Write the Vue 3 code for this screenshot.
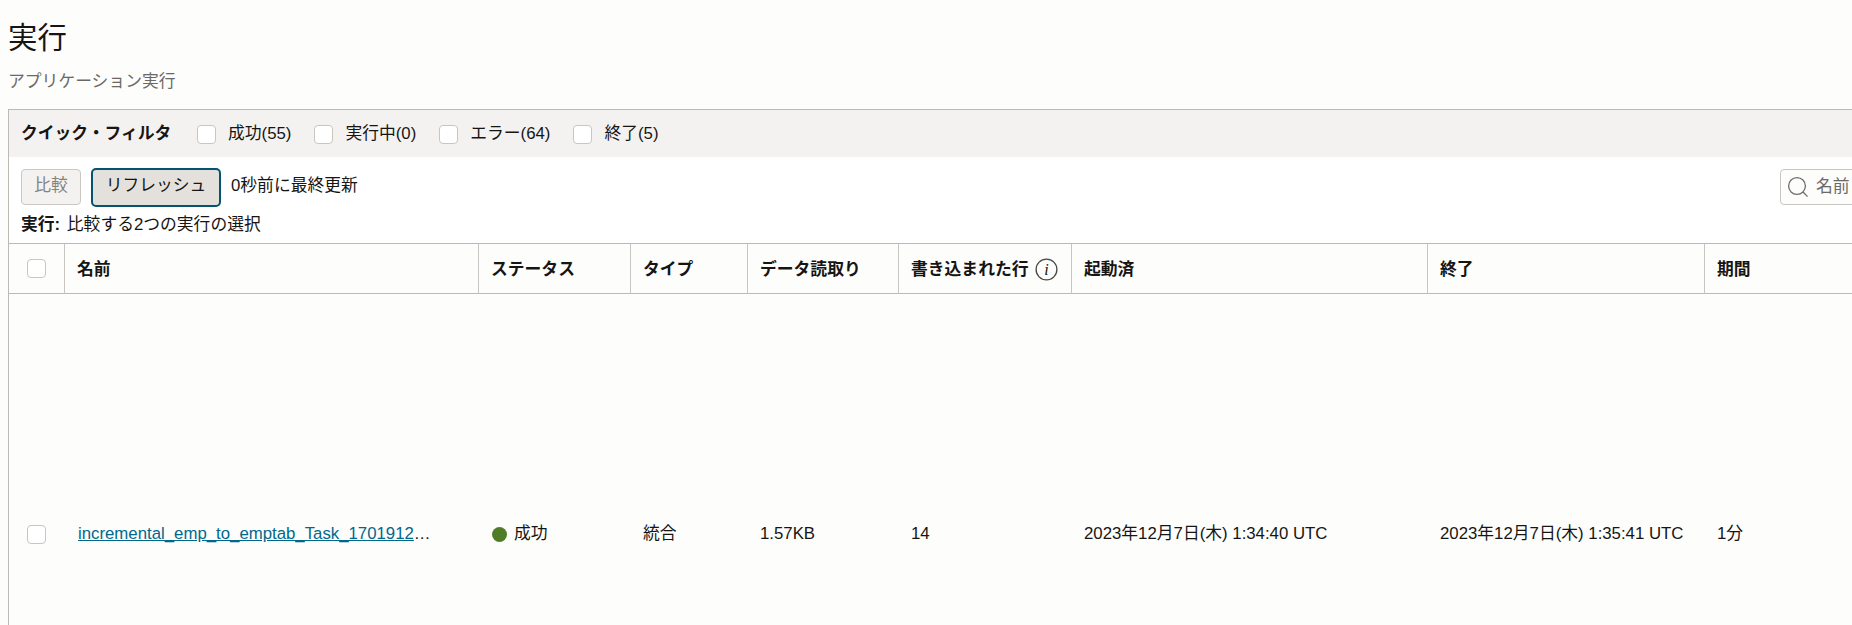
<script setup>
const filters = [
  { label: '成功(55)' },
  { label: '実行中(0)' },
  { label: 'エラー(64)' },
  { label: '終了(5)' },
]
const columns = ['名前', 'ステータス', 'タイプ', 'データ読取り', '書き込まれた行', '起動済', '終了', '期間']
</script>

<template>
  <div class="page">
    <h1 class="title">実行</h1>
    <p class="subtitle">アプリケーション実行</p>
    <section class="panel">
      <div class="filters">
        <strong class="filters-label">クイック・フィルタ</strong>
        <label v-for="f in filters" :key="f.label" class="filter">
          <span class="box"></span>
          <span>{{ f.label }}</span>
        </label>
      </div>
      <div class="toolbar">
        <button class="btn btn-disabled" type="button">比較</button>
        <button class="btn btn-focus" type="button">リフレッシュ</button>
        <span class="updated">0秒前に最終更新</span>
        <div class="search">
          <svg class="search-icon" width="22" height="22" viewBox="0 0 22 22" fill="none" stroke="#6f6c69" stroke-width="1.3">
            <circle cx="10" cy="10" r="8.4" />
            <path d="M16 16l4.6 4.6" />
          </svg>
          <span class="search-text">名前</span>
        </div>
      </div>
      <div class="caption"><strong class="caption-label">実行:</strong> 比較する2つの実行の選択</div>
      <div class="table">
        <div class="cell head check"><span class="box"></span></div>
        <div v-for="c in columns" :key="c" class="cell head">
          <span>{{ c }}</span>
          <svg v-if="c === '書き込まれた行'" class="info" width="23" height="23" viewBox="0 0 23 23">
            <circle cx="11.5" cy="11.5" r="10.4" fill="none" stroke="#4a4845" stroke-width="1.3" />
            <text x="11.5" y="16.5" text-anchor="middle" class="info-i">i</text>
          </svg>
        </div>
        <div class="cell body check"><span class="box"></span></div>
        <div class="cell body name">
          <div class="ellipsis"><a class="link" href="#">incremental_emp_to_emptab_Task_1701912345678</a></div>
        </div>
        <div class="cell body status"><span class="dot"></span>成功</div>
        <div class="cell body">統合</div>
        <div class="cell body">1.57KB</div>
        <div class="cell body">14</div>
        <div class="cell body">2023年12月7日(木) 1:34:40 UTC</div>
        <div class="cell body">2023年12月7日(木) 1:35:41 UTC</div>
        <div class="cell body">1分</div>
      </div>
    </section>
  </div>
</template>

<style scoped>
.page {
  height: 625px;
  overflow: hidden;
  background: #fdfdfc;
  color: #161513;
  font-family: "Liberation Sans", "Noto Sans CJK JP", sans-serif;
  font-size: 16.8px;
  line-height: 22px;
  padding-left: 8px;
  box-sizing: border-box;
}
.title {
  margin: 0;
  padding-top: 19px;
  font-size: 29.4px;
  font-weight: 400;
  line-height: 38px;
}
.subtitle {
  margin: 14px 0 0;
  font-size: 16.8px;
  line-height: 22px;
  color: #6b6966;
}
.panel {
  margin-top: 16px;
  border-top: 1px solid #bdb9b5;
  border-left: 1px solid #bdb9b5;
  height: 520px;
}
.filters {
  display: flex;
  align-items: center;
  height: 47px;
  box-sizing: border-box;
  padding-top: 1px;
  background: #f3f2f1;
  padding-left: 12px;
}
.filters-label {
  width: 176px;
}
.filter {
  display: flex;
  align-items: center;
  gap: 12px;
  margin-right: 23px;
}
.box {
  display: block;
  width: 19px;
  height: 19px;
  box-sizing: border-box;
  background: #fff;
  border: 1px solid #c9c6c2;
  border-radius: 4px;
}
.toolbar {
  display: flex;
  align-items: center;
  background: #fff;
  height: 60px;
  padding-left: 12px;
}
.btn {
  font: inherit;
  box-sizing: border-box;
  padding: 0 0 2px;
}
.btn-disabled {
  width: 60px;
  height: 36px;
  background: #f3f2f1;
  color: #85827f;
  border: 1px solid #cbc8c4;
  border-radius: 4px;
}
.btn-focus {
  width: 130px;
  height: 39px;
  margin-left: 10px;
  background: #e4e1dc;
  color: #161513;
  border: 2px solid #04536f;
  border-radius: 5px;
}
.updated {
  margin-left: 10px;
  margin-bottom: 2px;
}
.search {
  display: flex;
  align-items: center;
  margin-left: auto;
  margin-right: -30px;
  width: 102px;
  height: 36px;
  box-sizing: border-box;
  border: 1px solid #c9c6c2;
  border-radius: 4px;
  background: #fdfdfc;
  padding-left: 6px;
  flex: none;
}
.search-text {
  margin-left: 7px;
  color: #6b6966;
}
.caption {
  background: #fff;
  height: 26px;
  padding-left: 12px;
  line-height: 16px;
}
.caption-label {
  margin-right: 2px;
}
.table {
  display: grid;
  grid-template-columns: 56px 414px 152px 117px 151px 173px 356px 277px 1fr;
  grid-template-rows: 50px 480px;
  border-top: 1px solid #bdb9b5;
}
.cell {
  display: flex;
  align-items: center;
  min-width: 0;
  padding-left: 12px;
  box-sizing: border-box;
}
.head {
  font-weight: 700;
  padding-top: 2px;
  border-bottom: 1px solid #bdb9b5;
  border-right: 1px solid #c9c6c2;
  gap: 7px;
}
.head:nth-child(3) {
  padding-left: 12px;
}
.head:nth-child(9) {
  border-right: none;
}
.head.check {
  padding-top: 0;
}
.check {
  padding-left: 18px;
}
.name {
  padding-left: 13px;
}
.status {
  padding-left: 13px;
}
.ellipsis {
  width: 359px;
  white-space: nowrap;
  overflow: hidden;
  text-overflow: ellipsis;
}
.link {
  color: #00688c;
  text-decoration: underline;
}
.dot {
  width: 15px;
  height: 15px;
  border-radius: 50%;
  background: #4f7d26;
  margin-right: 7px;
}
.info {
  flex: none;
}
.info-i {
  font-family: "Liberation Serif", serif;
  font-style: italic;
  font-size: 16px;
  font-weight: 400;
  fill: #161513;
}
</style>
